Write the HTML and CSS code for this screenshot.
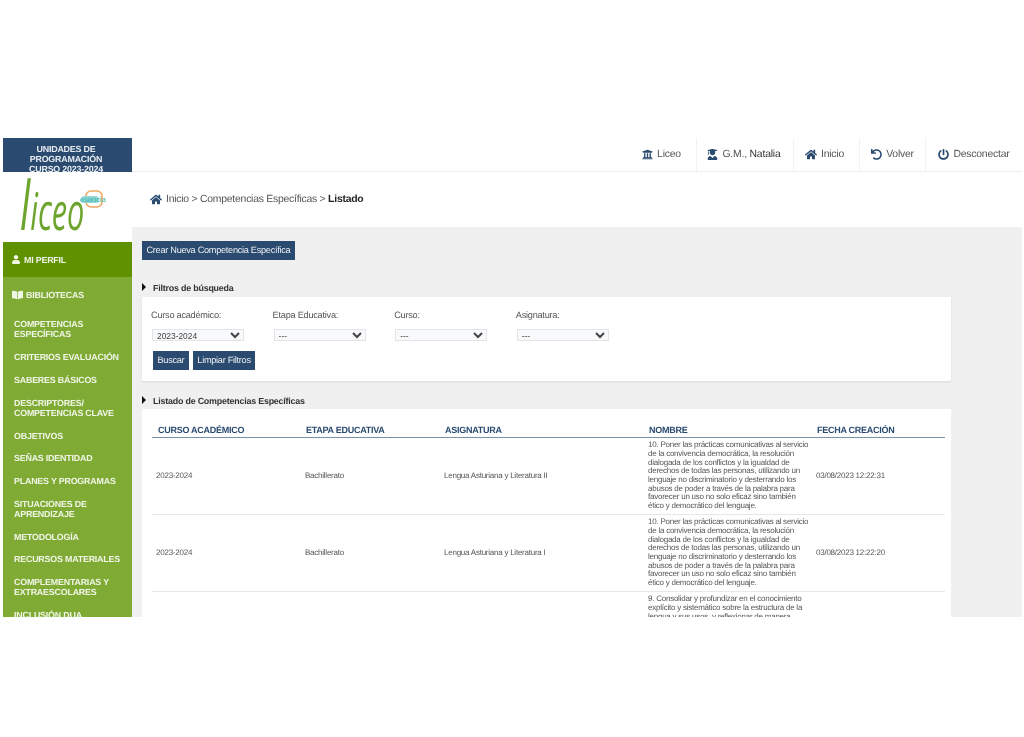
FILE: index.html
```html
<!DOCTYPE html>
<html lang="es">
<head>
<meta charset="utf-8">
<title>Competencias Específicas</title>
<link rel="stylesheet" href="styles.css">
</head>
<body>
<div class="app">
  <aside class="side">
    <div class="brand">UNIDADES DE<br>PROGRAMACIÓN<br>CURSO 2023-2024</div>
    <div class="logo">
      <svg class="logo-svg" viewBox="0 0 129 70" width="129" height="70">
        <rect class="logo-box" x="83" y="19" width="16" height="16" rx="5"/>
        <rect class="logo-band" x="78" y="24" width="18" height="7" rx="3.5"/>
        <text class="logo-word" transform="translate(17 58) scale(.59 1)"><tspan class="logo-l">l</tspan>iceo</text>
        <text class="logo-tag" x="77" y="30">esencia</text>
      </svg>
    </div>
    <a class="perfil"><svg class="ic-side" viewBox="0 0 448 512"><path d="M224 256c70.7 0 128-57.3 128-128S294.7 0 224 0 96 57.3 96 128s57.3 128 128 128zm89.6 32h-16.7c-22.2 10.2-46.9 16-72.9 16s-50.6-5.8-72.9-16h-16.7C60.2 288 0 348.2 0 422.4V464c0 26.5 21.5 48 48 48h352c26.5 0 48-21.5 48-48v-41.6c0-74.2-60.2-134.4-134.4-134.4z"/></svg>MI PERFIL</a>
    <nav class="menu">
      <a class="bib"><svg class="ic-book" viewBox="0 0 576 512"><path d="M542.22 32.05c-54.8 3.11-163.72 14.43-230.96 55.59-4.64 2.84-7.27 7.89-7.27 13.17v363.87c0 11.55 12.63 18.85 23.28 13.49 69.18-34.82 169.23-44.32 218.7-46.92 16.89-.89 30.02-14.43 30.02-30.66V62.75c.01-17.71-15.35-31.74-33.77-30.7zM264.73 87.64C197.5 46.48 88.58 35.17 33.78 32.05 15.36 31.01 0 45.04 0 62.75V400.6c0 16.24 13.13 29.78 30.02 30.66 49.49 2.6 149.59 12.11 218.77 46.95 10.62 5.35 23.21-1.94 23.21-13.46V100.63c0-5.29-2.62-10.14-7.27-12.99z"/></svg>BIBLIOTECAS</a>
      <a class="item">COMPETENCIAS<br>ESPECÍFICAS</a>
      <a class="item">CRITERIOS EVALUACIÓN</a>
      <a class="item">SABERES BÁSICOS</a>
      <a class="item">DESCRIPTORES/<br>COMPETENCIAS CLAVE</a>
      <a class="item">OBJETIVOS</a>
      <a class="item">SEÑAS IDENTIDAD</a>
      <a class="item">PLANES Y PROGRAMAS</a>
      <a class="item">SITUACIONES DE<br>APRENDIZAJE</a>
      <a class="item">METODOLOGÍA</a>
      <a class="item">RECURSOS MATERIALES</a>
      <a class="item">COMPLEMENTARIAS Y<br>EXTRAESCOLARES</a>
      <a class="item">INCLUSIÓN DUA</a>
    </nav>
  </aside>
  <div class="main">
    <header class="top">
      <a class="top-item w-liceo"><svg class="ic" viewBox="0 0 512 512"><path d="M496 128v16a8 8 0 0 1-8 8h-24v12c0 6.627-5.373 12-12 12H60c-6.627 0-12-5.373-12-12v-12H24a8 8 0 0 1-8-8v-16a8 8 0 0 1 4.941-7.392l232-88a7.996 7.996 0 0 1 6.118 0l232 88A8 8 0 0 1 496 128zm-24 304H40c-13.255 0-24 10.745-24 24v16a8 8 0 0 0 8 8h464a8 8 0 0 0 8-8v-16c0-13.255-10.745-24-24-24zM96 192v192H60c-6.627 0-12 5.373-12 12v20h416v-20c0-6.627-5.373-12-12-12h-36V192h-64v192h-64V192h-64v192h-64V192H96z"/></svg>Liceo</a>
      <a class="top-item w-user"><svg class="ic" viewBox="0 0 448 512"><path d="M319.4 320.6L224 416l-95.4-95.4C57.1 323.7 0 382.2 0 454.4v9.6c0 26.5 21.5 48 48 48h352c26.5 0 48-21.5 48-48v-9.6c0-72.2-57.1-130.7-128.6-133.8zM13.6 79.8l6.4 1.5v58.4c-7 4.2-12 11.5-12 20.3 0 8.4 4.6 15.4 11.1 19.7L3.5 242c-1.7 6.9 2.1 14 7.6 14h41.8c5.5 0 9.3-7.1 7.6-14l-15.6-62.3C51.4 175.4 56 168.4 56 160c0-8.8-5-16.1-12-20.3V87.1l66 15.9c-8.6 17.2-14 36.4-14 57 0 70.7 57.3 128 128 128s128-57.3 128-128c0-20.6-5.3-39.8-14-57l96.3-23.2c18.2-4.4 18.2-27.1 0-31.5l-190.4-46c-13-3.1-26.7-3.1-39.7 0L13.6 48.2c-18.1 4.4-18.1 27.2 0 31.6z"/></svg><span>G.M., <span class="dark">Natalia</span></span></a>
      <a class="top-item w-inicio"><svg class="ic ic-wide" viewBox="0 0 576 512"><path d="M280.37 148.26L96 300.11V464a16 16 0 0 0 16 16l112.06-.29a16 16 0 0 0 15.92-16V368a16 16 0 0 1 16-16h64a16 16 0 0 1 16 16v95.64a16 16 0 0 0 16 16.05L464 480a16 16 0 0 0 16-16V300L295.67 148.26a12.19 12.19 0 0 0-15.3 0zM571.6 251.47L488 182.56V44.05a12 12 0 0 0-12-12h-56a12 12 0 0 0-12 12v72.61L318.47 43a48 48 0 0 0-61 0L4.34 251.47a12 12 0 0 0-1.6 16.9l25.5 31A12 12 0 0 0 45.15 301l235.22-193.74a12.19 12.19 0 0 1 15.3 0L530.9 301a12 12 0 0 0 16.9-1.6l25.5-31a12 12 0 0 0-1.7-16.93z"/></svg>Inicio</a>
      <a class="top-item w-volver"><svg class="ic" viewBox="0 0 512 512"><path d="M212.333 224.333H12c-6.627 0-12-5.373-12-12V12C0 5.373 5.373 0 12 0h48c6.627 0 12 5.373 12 12v78.112C117.773 39.279 184.26 7.47 258.175 8.007c136.906.994 246.448 111.623 246.157 248.532C504.041 393.258 393.12 504 256.333 504c-64.089 0-122.496-24.313-166.51-64.215-5.099-4.622-5.334-12.554-.467-17.42l33.967-33.967c4.474-4.474 11.662-4.717 16.401-.525C170.76 415.336 211.58 432 256.333 432c97.268 0 176-78.716 176-176 0-97.267-78.716-176-176-176-58.496 0-110.28 28.476-142.274 72.333h98.274c6.627 0 12 5.373 12 12v48c0 6.627-5.373 12-12 12z"/></svg>Volver</a>
      <a class="top-item w-salir"><svg class="ic" viewBox="0 0 512 512"><path d="M400 54.1c63 45 104 118.6 104 201.9 0 136.8-110.8 247.7-247.5 248C120 504.3 8.2 393 8 256.4 7.9 173.1 48.9 99.3 111.8 54.2c11.7-8.3 28-4.8 35 7.7L162.6 90c5.9 10.5 3.1 23.8-6.6 31-41.5 30.8-68 79.6-68 134.9-.1 92.3 74.5 168.1 168 168.1 91.6 0 168.6-74.2 168-169.1-.3-51.8-24.7-101.8-68.1-134-9.7-7.2-12.4-20.5-6.5-30.9l15.8-28.1c7-12.4 23.2-16.1 34.8-7.8zM296 264V24c0-13.3-10.7-24-24-24h-32c-13.3 0-24 10.7-24 24v240c0 13.3 10.7 24 24 24h32c13.3 0 24-10.7 24-24z"/></svg>Desconectar</a>
    </header>
    <div class="crumbs"><svg class="ic-crumb" viewBox="0 0 576 512"><path d="M280.37 148.26L96 300.11V464a16 16 0 0 0 16 16l112.06-.29a16 16 0 0 0 15.92-16V368a16 16 0 0 1 16-16h64a16 16 0 0 1 16 16v95.64a16 16 0 0 0 16 16.05L464 480a16 16 0 0 0 16-16V300L295.67 148.26a12.19 12.19 0 0 0-15.3 0zM571.6 251.47L488 182.56V44.05a12 12 0 0 0-12-12h-56a12 12 0 0 0-12 12v72.61L318.47 43a48 48 0 0 0-61 0L4.34 251.47a12 12 0 0 0-1.6 16.9l25.5 31A12 12 0 0 0 45.15 301l235.22-193.74a12.19 12.19 0 0 1 15.3 0L530.9 301a12 12 0 0 0 16.9-1.6l25.5-31a12 12 0 0 0-1.7-16.93z"/></svg>Inicio &gt; Competencias Específicas &gt; <strong>Listado</strong></div>
    <main class="content">
      <a class="btn btn-new">Crear Nueva Competencia Específica</a>
      <h2 class="sec sec-f"><span class="tri"></span>Filtros de búsqueda</h2>
      <section class="card filters">
        <div class="fields">
          <label class="field">Curso académico:<select class="sel"><option>2023-2024</option></select></label>
          <label class="field">Etapa Educativa:<select class="sel"><option>---</option></select></label>
          <label class="field">Curso:<select class="sel"><option>---</option></select></label>
          <label class="field">Asignatura:<select class="sel"><option>---</option></select></label>
        </div>
        <div class="actions"><a class="btn">Buscar</a><a class="btn">Limpiar Filtros</a></div>
      </section>
      <h2 class="sec sec-l"><span class="tri"></span>Listado de Competencias Específicas</h2>
      <section class="card list">
        <table class="tbl">
          <colgroup><col class="c1"><col class="c2"><col class="c3"><col class="c4"><col class="c5"></colgroup>
          <thead><tr><th>CURSO ACADÉMICO</th><th>ETAPA EDUCATIVA</th><th>ASIGNATURA</th><th>NOMBRE</th><th>FECHA CREACIÓN</th></tr></thead>
          <tbody>
            <tr><td>2023-2024</td><td>Bachillerato</td><td>Lengua Asturiana y Literatura II</td><td>10. Poner las prácticas comunicativas al servicio de la convivencia democrática, la resolución dialogada de los conflictos y la igualdad de derechos de todas las personas, utilizando un lenguaje no discriminatorio y desterrando los abusos de poder a través de la palabra para favorecer un uso no solo eficaz sino también ético y democrático del lenguaje.</td><td>03/08/2023 12:22:31</td></tr>
            <tr><td>2023-2024</td><td>Bachillerato</td><td>Lengua Asturiana y Literatura I</td><td>10. Poner las prácticas comunicativas al servicio de la convivencia democrática, la resolución dialogada de los conflictos y la igualdad de derechos de todas las personas, utilizando un lenguaje no discriminatorio y desterrando los abusos de poder a través de la palabra para favorecer un uso no solo eficaz sino también ético y democrático del lenguaje.</td><td>03/08/2023 12:22:20</td></tr>
            <tr><td>2023-2024</td><td>Bachillerato</td><td>Lengua Asturiana y Literatura I</td><td>9. Consolidar y profundizar en el conocimiento explícito y sistemático sobre la estructura de la lengua y sus usos, y reflexionar de manera progresivamente autónoma sobre las elecciones lingüísticas y discursivas, con la terminología adecuada, para desarrollar la conciencia lingüística, para aumentar el repertorio comunicativo y para mejorar las destrezas tanto de producción oral y escrita como de comprensión e interpretación crítica.</td><td>03/08/2023 12:22:10</td></tr>
          </tbody>
        </table>
      </section>
    </main>
  </div>
</div>
</body>
</html>
```
FILE: styles.css
```css
* { box-sizing: border-box; }
html, body { margin: 0; height: 100%; background: #fff; }
body { padding: 138px 2px 0 3px; font-family: "Liberation Sans", Arial, sans-serif; color: #444; overflow: hidden; text-rendering: geometricPrecision; }
a { display: block; }
.app { display: flex; height: 479px; overflow: hidden; filter: blur(.35px); }

.side { width: 129px; flex: none; display: flex; flex-direction: column; background: #fff; }
.brand { height: 34px; flex: none; padding: 6px 3px 0 0; overflow: hidden; background: #2a4a6f; color: #e8edf2; font-size: 8.9px; letter-spacing: -.2px; font-weight: 700; line-height: 10px; text-align: center; }
.logo { height: 70px; flex: none; }
.logo-svg { display: block; }
.logo-box { fill: #fff; stroke: #f0a860; stroke-width: 1.6; }
.logo-band { fill: #8fd6d4; }
.logo-word { font-family: "Open Sans", sans-serif; font-style: italic; font-size: 52px; letter-spacing: 0; fill: #6da52e; }
.logo-l { font-size: 68px; }
.logo-tag { font-family: "Liberation Sans", sans-serif; font-size: 7.5px; fill: #3eb4b0; }
.perfil { height: 35px; flex: none; display: flex; align-items: center; padding-left: 9px; background: #5f9100; color: #f1f5e6; font-size: 8.9px; letter-spacing: -.2px; font-weight: 700; }
.ic-side { width: 8px; height: 9px; margin-right: 4px; fill: #f1f5e6; }
.menu { flex: 1; background: #7fab35; color: #f1f5e6; font-size: 8.9px; letter-spacing: -.2px; font-weight: 700; line-height: 10px; }
.bib { height: 36px; display: flex; align-items: center; padding: 0 0 0 9px; }
.ic-book { width: 11px; height: 10px; margin-right: 3px; fill: #f1f5e6; }
.item { padding: 6.4px 4px 6.4px 11px; }

.main { flex: 1; min-width: 0; display: flex; flex-direction: column; background: #f0f0f0; }
.top { height: 34px; flex: none; display: flex; justify-content: flex-end; background: #fff; border-bottom: 1px solid #eee; font-size: 10.4px; letter-spacing: -.2px; }
.top-item { display: flex; align-items: center; justify-content: center; border-left: 1px solid #f2f2f2; color: #555; }
.w-liceo { width: 66px; border-left: 0; padding-right: 3px; }
.w-user { width: 97px; padding-right: 2px; }
.w-inicio { width: 66px; padding-right: 4px; }
.w-volver { width: 66px; }
.w-salir { width: 97px; }
.dark { color: #333; }
.ic { width: 11px; height: 11px; margin-right: 4px; fill: #2a4a6f; }
.ic-wide { width: 12px; }
.crumbs { height: 55px; flex: none; display: flex; align-items: center; padding-left: 18px; background: #fff; font-size: 10.4px; letter-spacing: -.23px; color: #555; white-space: pre; }
.crumbs strong { color: #222; }
.ic-crumb { width: 12px; height: 11px; margin-right: 4px; fill: #2a4a6f; }

.content { flex: 1; min-height: 0; padding: 14px 0 0 10px; }
.btn { background: #2a4a6f; color: #eef1f5; font-size: 9.2px; letter-spacing: -.29px; height: 19px; line-height: 19px; padding: 0 4.5px; }
.btn-new { width: 153px; white-space: nowrap; }
.sec { display: flex; align-items: center; margin: 0; font-size: 8.9px; letter-spacing: -.2px; font-weight: 700; color: #333; }
.sec-f { margin-top: 22px; height: 12px; }
.sec-l { margin-top: 14px; height: 12px; }
.tri { width: 0; height: 0; margin: -3px 7px 0 0; border-left: 4px solid #111; border-top: 4px solid transparent; border-bottom: 4px solid transparent; }
.card { width: 809px; background: #fff; }
.filters { height: 84px; margin-top: 3px; padding: 13px 0 0 9px; box-shadow: 0 1px 2px rgba(0,0,0,.1); }
.fields { display: grid; grid-template-columns: repeat(4, 121.6px); }
.field { display: block; font-size: 9.2px; letter-spacing: -.25px; line-height: 10px; color: #555; }
.sel { display: block; width: 92px; height: 12px; margin: 9px 0 0 1px; padding: 0; border: 1px solid #e2e4e8; border-radius: 0; background: #f8f9fb; color: #444; font: 8.4px "Liberation Sans", sans-serif; }
.actions { display: flex; gap: 4px; margin: 10px 0 0 2px; }
.list { height: 220px; margin-top: 2px; padding: 0 6px 0 10px; overflow: hidden; }
.tbl { width: 793px; table-layout: fixed; border-collapse: collapse; font-size: 8px; letter-spacing: -.24px; color: #555; }
.c1 { width: 149px; }
.c2 { width: 139px; }
.c3 { width: 204px; }
.c4 { width: 168px; }
.c5 { width: 133px; }
.tbl th { height: 28.5px; padding: 14px 0 0 5px; border-bottom: 1.5px solid #7b8fa5; color: #2a4a6f; font-size: 9px; letter-spacing: -.27px; text-align: left; vertical-align: middle; }
.tbl th:first-child { padding-left: 6px; }
.tbl td { padding: 3.2px 4px; border-bottom: 1px solid #e8e8e8; vertical-align: middle; line-height: 8.7px; }
.tbl td:nth-child(4) { padding-right: 2px; }
```
